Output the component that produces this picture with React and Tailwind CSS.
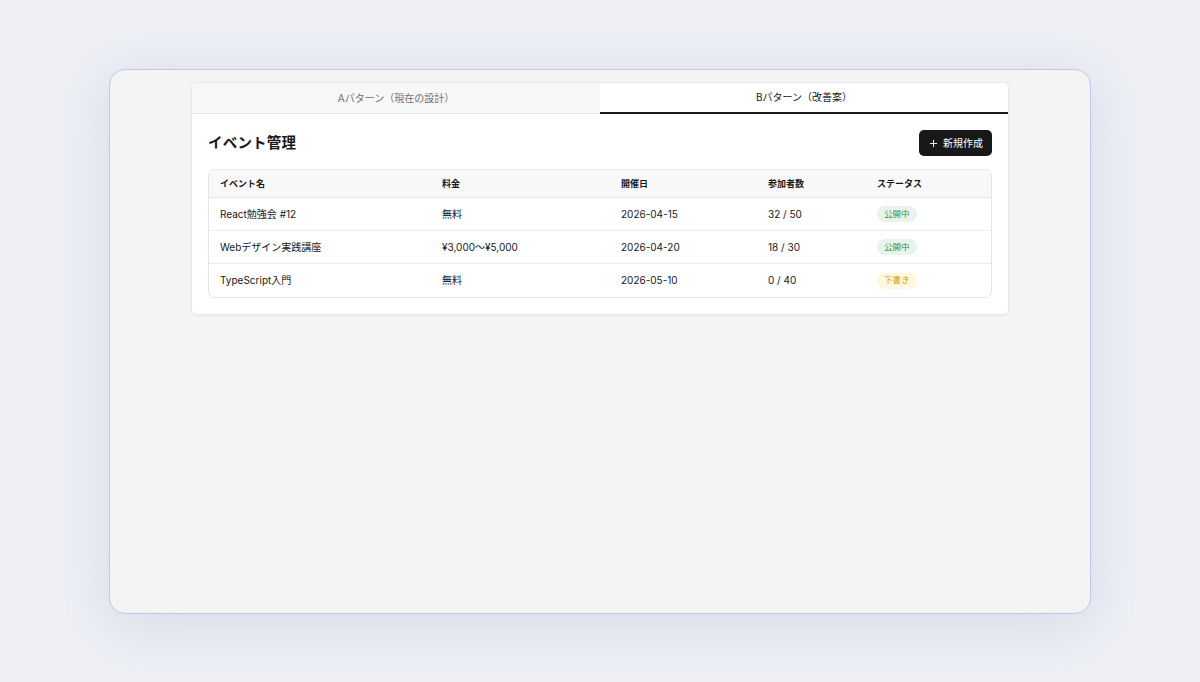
import { Plus } from 'lucide-react';

const events = [
    { name: 'React勉強会 #12', fee: '無料', date: '2026-04-15', count: '32 / 50', status: 'public' },
    { name: 'Webデザイン実践講座', fee: '¥3,000〜¥5,000', date: '2026-04-20', count: '18 / 30', status: 'public' },
    { name: 'TypeScript入門', fee: '無料', date: '2026-05-10', count: '0 / 40', status: 'draft' }
];

function StatusBadge({ status }) {
    if (status === 'draft') {
        return (
            <span className="inline-flex items-center h-[16px] px-[7px] rounded-full bg-[#fef8e1] text-[#d39f1c] text-[8.5px]">
                下書き
            </span>
        );
    }
    return (
        <span className="inline-flex items-center h-[16px] px-[7px] rounded-full bg-[#e7f4ea] text-[#3d8a55] text-[8.5px]">
            公開中
        </span>
    );
}

export default function App() {
    return (
        <div
            className="w-[1200px] h-[682px] bg-[#eef0f5] flex items-start justify-center pt-[69px] text-[#18181b]"
            style={{ fontFamily: 'Inter, "Noto Sans CJK JP", sans-serif' }}
        >
            {/* Preview frame */}
            <div className="w-[982px] h-[545px] rounded-[16px] border border-[#c2c4f2] bg-[#f4f4f4] shadow-[0_10px_60px_rgba(90,100,180,0.16)] flex justify-center pt-[12px]">
                <div className="w-[818px] self-start bg-white rounded-[6px] border border-[#e8e8e8] shadow-[0_1px_3px_rgba(0,0,0,0.04)] overflow-hidden">
                    {/* Tabs */}
                    <div className="flex h-[31px] border-b border-[#e8e8e8]">
                        <button className="flex-1 bg-[#f7f7f7] text-[#707070] text-[10px]">Aパターン（現在の設計）</button>
                        <button className="flex-1 bg-white text-[#18181b] text-[10px] border-b-2 border-[#18181b] -mb-px">Bパターン（改善案）</button>
                    </div>

                    <div className="px-[16px] pt-[16px] pb-[16px]">
                        {/* Header */}
                        <div className="flex items-center justify-between h-[26px]">
                            <h1 className="text-[14.5px] font-bold tracking-[0.2px]">イベント管理</h1>
                            <button className="flex items-center gap-[4px] h-[26px] px-[9px] rounded-[5px] bg-[#18181b] text-white text-[10px]">
                                <Plus className="w-[11px] h-[11px]" strokeWidth={2} />
                                <span>新規作成</span>
                            </button>
                        </div>

                        {/* Table */}
                        <div className="mt-[13px] border border-[#e6e6e6] rounded-[6px] overflow-hidden">
                            <div className="grid grid-cols-[222px_179px_147px_109px_1fr] h-[28px] items-center bg-[#f8f8f8] border-b border-[#e6e6e6] text-[9px] font-bold">
                                <div className="pl-[11px]">イベント名</div>
                                <div className="pl-[11px]">料金</div>
                                <div className="pl-[11px]">開催日</div>
                                <div className="pl-[11px]">参加者数</div>
                                <div className="pl-[11px]">ステータス</div>
                            </div>
                            {events.map((ev, i) => (
                                <div
                                    key={ev.name}
                                    className={`grid grid-cols-[222px_179px_147px_109px_1fr] h-[33px] items-center text-[10px] ${i < events.length - 1 ? 'border-b border-[#ececec]' : ''}`}
                                >
                                    <div className="pl-[11px]">{ev.name}</div>
                                    <div className="pl-[11px]">{ev.fee}</div>
                                    <div className="pl-[11px]">{ev.date}</div>
                                    <div className="pl-[11px]">{ev.count}</div>
                                    <div className="pl-[11px]"><StatusBadge status={ev.status} /></div>
                                </div>
                            ))}
                        </div>
                    </div>
                </div>
            </div>
        </div>
    );
}
